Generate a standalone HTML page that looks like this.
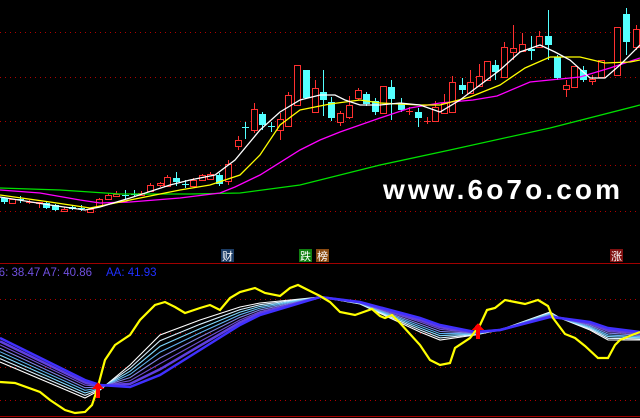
<!DOCTYPE html>
<html><head><meta charset="utf-8"><style>
html,body{margin:0;padding:0;background:#000;width:640px;height:418px;overflow:hidden}
svg{display:block}
.t{font-family:"Liberation Sans","Noto Sans CJK SC",sans-serif}
</style></head><body>
<svg id="s" width="640" height="418" viewBox="0 0 640 418" xmlns="http://www.w3.org/2000/svg" shape-rendering="crispEdges">
<g stroke="#b00000" stroke-width="1" stroke-dasharray="1,4">
<line x1="0" y1="32.5" x2="640" y2="32.5"/><line x1="0" y1="77.5" x2="640" y2="77.5"/>
<line x1="0" y1="121.5" x2="640" y2="121.5"/><line x1="0" y1="165.5" x2="640" y2="165.5"/>
<line x1="0" y1="211.5" x2="640" y2="211.5"/>
<line x1="0" y1="299.5" x2="640" y2="299.5"/><line x1="0" y1="333.5" x2="640" y2="333.5"/>
<line x1="0" y1="367.5" x2="640" y2="367.5"/><line x1="0" y1="400.5" x2="640" y2="400.5"/>
</g>
<line x1="0" y1="263.5" x2="640" y2="263.5" stroke="#a00000"/>
<line x1="0" y1="416.5" x2="640" y2="416.5" stroke="#a00000"/>
<g id="cand"></g>
<g id="ma" fill="none" stroke-width="1.3" shape-rendering="auto">
<polyline stroke="#00e000" points="0,188 60,190 120,194 190,194 240,193 300,185 380,165 450,150 550,128 640,105"/>
<polyline stroke="#ff00ff" points="0,190 40,193 80,200 100,203 130,202 180,198 220,193 235,187 260,175 300,150 320,140 340,132 380,118 410,108 440,103 473,100 497,96 530,82 550,80 580,77 610,68 640,58"/>
<polyline stroke="#ffff00" points="0,195 50,202 90,208 130,200 180,190 210,185 240,175 260,155 280,125 300,110 330,104 360,100 380,103 420,105 440,105 470,97 500,85 525,68 550,57 580,57 605,63 630,62 640,60"/>
<polyline stroke="#ffffff" points="0,197 50,205 85,210 100,207 130,198 170,185 190,180 215,175 235,160 260,130 280,112 300,100 320,95 335,95 345,100 360,105 380,105 400,103 420,105 440,112 460,100 480,85 500,70 520,52 540,45 555,52 570,60 590,78 605,78 620,65 640,45"/>
</g>
<text x="383" y="199" class="t" font-size="28" font-weight="bold" fill="#fff" textLength="237" lengthAdjust="spacing">www.6o7o.com</text>
<rect x="221" y="249" width="13" height="13" fill="#1c3c64"/><text x="222" y="260" class="t" font-size="11" fill="#fff">财</text>
<rect x="299" y="249" width="13" height="13" fill="#108010"/><text x="300" y="260" class="t" font-size="11" fill="#fff">跌</text>
<rect x="316" y="249" width="13" height="13" fill="#8a4a10"/><text x="317" y="260" class="t" font-size="11" fill="#fff">榜</text>
<rect x="610" y="249" width="13" height="13" fill="#801010"/><text x="611" y="260" class="t" font-size="11" fill="#fff">涨</text>
<text x="-9" y="276" class="t" font-size="11.5" fill="#7050e0">A6: 38.47  A7: 40.86</text>
<text x="106" y="276" class="t" font-size="11.5" fill="#2030ff">AA: 41.93</text>
<g id="rib" fill="none" shape-rendering="auto"></g>
<polyline fill="none" stroke="#ffff00" stroke-width="2.2" shape-rendering="auto" points="0,382 15,383 40,392 50,400 65,410 75,413 85,412 92,405 97,390 105,360 115,345 130,335 140,320 155,305 165,302 175,307 185,313 200,308 210,305 220,310 230,298 240,292 255,288 265,293 280,296 290,288 298,285 308,290 320,296 330,302 340,312 355,315 372,309 380,316 385,318 392,315 400,323 420,345 430,360 440,365 450,363 455,348 470,338 480,325 487,310 495,308 505,300 515,302 525,304 538,300 548,306 553,318 565,334 575,338 585,346 598,358 608,358 615,345 620,340 632,335 640,332"/>
<g fill="#ff0000"><polygon points="98,382 92,389 96,389 96,398 100,398 100,389 104,389"/>
<polygon points="478,323 472,330 476,330 476,339 480,339 480,330 484,330"/></g>
</svg>
<script>
var C=[[4,198,202,197,204,0],[12,199,203,199,203,1],[20,199,199,196,203,0],[29,202,202,200,204,1],[39,202,203,202,208,1],[46,203,208,201,209,0],[55,205,210,204,211,0],[64,209,211,207,212,1],[72,207,209,205,210,0],[81,208,208,205,211,0],[90,209,212,208,213,1],[99,199,206,198,207,1],[108,195,199,193,200,1],[116,194,196,191,197,1],[125,195,195,190,199,0],[134,194,194,190,197,0],[141,193,195,191,196,1],[150,185,191,183,192,1],[160,183,185,182,187,1],[167,177,186,175,187,1],[176,178,182,172,186,0],[185,184,184,180,188,0],[193,180,186,178,187,1],[202,175,180,174,181,1],[210,174,179,172,180,1],[219,175,184,173,186,0],[228,164,181,160,185,1],[238,140,146,136,150,1],
[245,127,127,122,139,0],[254,109,130,103,133,1],[262,114,125,112,130,0],[271,126,126,122,132,0],[280,119,130,113,140,1],[288,95,126,92,127,1],[297,65,105,65,105,1],[306,70,98,70,98,0],[315,88,112,80,112,1],[323,92,100,70,116,0],[331,102,118,97,121,0],[340,113,122,111,126,1],[349,105,117,96,119,1],[358,90,98,88,100,1],[366,94,104,92,106,0],[375,101,112,98,115,0],[383,86,113,86,113,1],[391,87,99,80,120,0],[401,103,110,98,112,0],[409,111,111,107,115,1],[418,112,118,108,127,0],[427,121,121,117,124,1],[435,107,121,101,121,1],
[444,103,113,94,113,1],[452,82,112,76,112,1],[462,85,90,78,94,0],[470,82,93,70,93,1],[479,76,86,64,86,1],[487,61,80,61,80,1],[495,65,72,60,80,0],[504,47,77,42,77,1],[513,48,52,25,60,1],[522,44,51,33,51,1],[531,49,51,36,60,0],[539,36,47,31,47,1],[548,36,45,10,60,0],[557,57,78,55,80,0],[566,85,89,80,97,1],[574,66,87,66,87,1],[583,70,80,66,82,0],[592,79,81,75,85,1],[601,60,77,60,77,1],[617,27,75,27,75,1],[626,14,42,8,55,0],[636,29,47,25,50,1]];
var g=document.getElementById('cand'),h='';
C.forEach(function(c){var x=c[0],t=Math.min(c[1],c[2]),b=Math.max(c[1],c[2]),col=c[5]?'#ff3030':'#54ffff';
h+='<line x1="'+(x+.5)+'" y1="'+c[3]+'" x2="'+(x+.5)+'" y2="'+c[4]+'" stroke="'+col+'"/>';
if(b-t<1)h+='<line x1="'+(x-3)+'" y1="'+(t+.5)+'" x2="'+(x+4)+'" y2="'+(t+.5)+'" stroke="'+col+'"/>';
else if(c[5])h+='<rect x="'+(x-2.5)+'" y="'+(t+.5)+'" width="6" height="'+(b-t)+'" fill="#000" stroke="'+col+'"/>';
else h+='<rect x="'+(x-3)+'" y="'+t+'" width="7" height="'+(b-t)+'" fill="'+col+'"/>';});
g.innerHTML=h;
var X=[0,85,100,130,160,200,240,260,320,360,420,440,475,500,550,560,590,608,640];
var TOP=[338,380,385,387,375,350,325,315,297,302,318,325,332,330,317,318,322,328,332];
var BOT=[362,398,390,365,335,320,307,303,297,304,332,340,335,330,312,318,330,340,340];
var cols=['#ffffff','#d8f0ff','#80d8ff','#60b0f0','#8080e0','#7050d0','#6040e0','#4030ff'];
var r=document.getElementById('rib'),s='';
for(var k=0;k<cols.length;k++){var f=k/(cols.length-1),p=[];
for(var i=0;i<X.length;i++)p.push(X[i]+','+(BOT[i]+(TOP[i]-BOT[i])*f).toFixed(1));
s+='<polyline stroke="'+cols[k]+'" stroke-width="'+(k>=6?2.5:1.1)+'" points="'+p.join(' ')+'"/>';}
r.innerHTML=s;
</script>
</body></html>
